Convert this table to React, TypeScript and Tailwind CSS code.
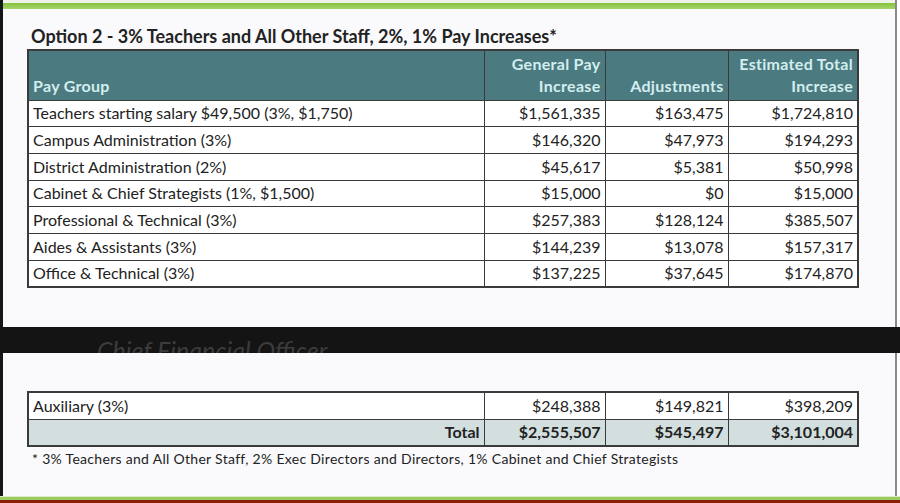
import React from "react";

const rows = [
  ["Teachers starting salary $49,500 (3%, $1,750)", "$1,561,335", "$163,475", "$1,724,810"],
  ["Campus Administration (3%)", "$146,320", "$47,973", "$194,293"],
  ["District Administration (2%)", "$45,617", "$5,381", "$50,998"],
  ["Cabinet & Chief Strategists (1%, $1,500)", "$15,000", "$0", "$15,000"],
  ["Professional & Technical (3%)", "$257,383", "$128,124", "$385,507"],
  ["Aides & Assistants (3%)", "$144,239", "$13,078", "$157,317"],
  ["Office & Technical (3%)", "$137,225", "$37,645", "$174,870"],
];

const font = { fontFamily: "Lato, 'Open Sans', sans-serif" };

function Cols() {
  return (
    <colgroup>
      <col className="w-[456px]" />
      <col className="w-[121px]" />
      <col className="w-[123px]" />
      <col className="w-[130px]" />
    </colgroup>
  );
}

function Row({ cells }: { cells: string[] }) {
  return (
    <tr className="h-[26.7px]">
      {cells.map((c, i) => (
        <td
          key={i}
          className={`border border-[#3a3a3a] px-[4px] py-0 leading-none ${i === 0 ? "text-left" : "text-right"}`}
        >
          {c}
        </td>
      ))}
    </tr>
  );
}

export default function App() {
  return (
    <div
      className="w-[900px] h-[503px] flex flex-col overflow-hidden bg-white text-[#222222]"
      style={font}
    >
      {/* upper half of slide */}
      <div className="flex h-[327px]">
        <div className="w-[3px] bg-[#161616]" />
        <div className="flex-1 flex flex-col bg-[#fafafd] border-r-2 border-[#8a8a8a]">
          <div className="h-[3px] bg-[#eef3ea]" />
          <div className="h-[6px] bg-gradient-to-b from-[#86c23a] to-[#a5d46a]" />
          <h1 className="mt-[16px] ml-[28px] text-[18px] font-bold leading-[22px] mb-[2px]">
            Option 2 - 3% Teachers and All Other Staff, 2%, 1% Pay Increases*
          </h1>
          <table className="ml-[24px] mt-0 w-[830px] table-fixed border-collapse border-2 border-[#3a3a3a] text-[16px]">
            <Cols />
            <thead>
              <tr className="h-[50px] bg-[#4b7a80] text-[#d3eeee] font-bold align-bottom tracking-[0.3px]">
                <th className="px-[4px] pb-[3px] text-left font-bold leading-[22px]">Pay Group</th>
                <th className="border-x border-[#3a3a3a] px-[4px] pb-[3px] text-right font-bold leading-[22px]">
                  General Pay
                  <br />
                  Increase
                </th>
                <th className="border-x border-[#3a3a3a] px-[4px] pb-[3px] text-right font-bold leading-[22px]">
                  Adjustments
                </th>
                <th className="px-[4px] pb-[3px] text-right font-bold leading-[22px]">
                  Estimated Total
                  <br />
                  Increase
                </th>
              </tr>
            </thead>
            <tbody className="bg-white">
              {rows.map((r) => (
                <Row key={r[0]} cells={r} />
              ))}
            </tbody>
          </table>
        </div>
        <div className="w-[3px] bg-white" />
      </div>

      {/* black band, the next slide's heading shows through cut off */}
      <div className="h-[26px] bg-[#141414] overflow-hidden">
        <div className="ml-[97px] mt-[8px] text-[25px] italic leading-[30px] text-[#3c3c3c]">
          Chief Financial Officer
        </div>
      </div>

      {/* lower half */}
      <div className="flex h-[143px]">
        <div className="w-[3px] bg-[#161616]" />
        <div className="flex-1 flex flex-col bg-[#fafafd] border-r-2 border-[#8a8a8a]">
          <table className="ml-[24px] mt-[38px] w-[830px] table-fixed border-collapse border-2 border-[#3a3a3a] text-[16px]">
            <Cols />
            <tbody>
              <tr className="h-[27px] bg-white">
                <td className="border border-[#3a3a3a] px-[4px] text-left">Auxiliary (3%)</td>
                <td className="border border-[#3a3a3a] px-[4px] text-right">$248,388</td>
                <td className="border border-[#3a3a3a] px-[4px] text-right">$149,821</td>
                <td className="border border-[#3a3a3a] px-[4px] text-right">$398,209</td>
              </tr>
              <tr className="h-[27px] bg-[#d2dfde] font-bold">
                <td className="border border-[#3a3a3a] px-[4px] text-right">Total</td>
                <td className="border border-[#3a3a3a] px-[4px] text-right">$2,555,507</td>
                <td className="border border-[#3a3a3a] px-[4px] text-right">$545,497</td>
                <td className="border border-[#3a3a3a] px-[4px] text-right">$3,101,004</td>
              </tr>
            </tbody>
          </table>
          <p className="ml-[29px] mt-[3px] text-[14px] leading-[17px] tracking-[0.3px]">
            * 3% Teachers and All Other Staff, 2% Exec Directors and Directors, 1% Cabinet and Chief Strategists
          </p>
        </div>
        <div className="w-[3px] bg-white" />
      </div>

      {/* bottom bars */}
      <div className="h-[1px] bg-[#dcebc6]" />
      <div className="h-[3px] bg-[#9ccb60]" />
      <div className="flex-1 bg-[#8a1f0c]" />
    </div>
  );
}
